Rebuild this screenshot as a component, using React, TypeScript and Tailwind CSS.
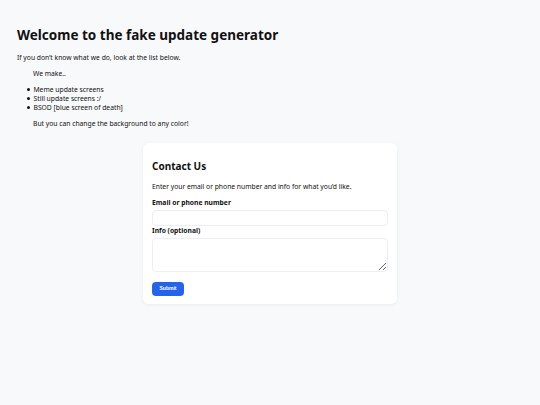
import React from 'react';

const items = ['Meme update screens', 'Still update screens :/', 'BSOD [blue screen of death]'];

export default function App() {
  return (
    <div className="min-h-[405px] bg-[#f8f9fb] text-[#111] px-[17px] pt-[23px] pb-8" style={{ fontFamily: '"Noto Sans", sans-serif' }}>
      <h1 className="text-[13.5px] font-bold leading-[24px]">Welcome to the fake update generator</h1>
      <p className="mt-[6px] text-[6.75px] leading-[10px]">If you don’t know what we do, look at the list below.</p>
      <p className="mt-[6px] ml-[16px] text-[6.75px] leading-[10px]">We make..</p>
      <ul className="mt-[6px] ml-[10px] text-[6.75px] leading-[9px]">
        {items.map((t) => (
          <li key={t} className="flex items-center gap-[4px]">
            <span className="block h-[2.5px] w-[2.5px] rounded-full bg-[#111]" />
            <span>{t}</span>
          </li>
        ))}
      </ul>
      <p className="mt-[7px] ml-[16px] text-[6.75px] leading-[10px]">But you can change the background to any color!</p>

      <div className="mt-[14px] ml-[126px] w-[254px] rounded-[6px] bg-white px-[9px] pt-[15px] pb-[8px] shadow-[0_1px_4px_rgba(0,0,0,0.06)]">
        <h2 className="text-[10px] font-bold leading-[16px]">Contact Us</h2>
        <p className="mt-[8px] text-[6.75px] leading-[10px]">Enter your email or phone number and info for what you’d like.</p>
        <label className="mt-[6px] block text-[6.75px] font-bold leading-[10px]">Email or phone number</label>
        <input className="mt-[2px] block h-[16px] w-[236px] rounded-[4px] border border-[#eceef1] bg-white" />
        <label className="mt-0 block text-[6.75px] font-bold leading-[10px]">Info (optional)</label>
        <textarea className="mt-[2px] block h-[34px] w-[236px] rounded-[4px] border border-[#eceef1] bg-white" />
        <button className="mt-[5px] h-[14px] w-[32px] rounded-[4px] bg-[#2563eb] text-[5px] font-bold text-white" style={{ fontFamily: '"Liberation Sans", sans-serif' }}>Submit</button>
      </div>
    </div>
  );
}
